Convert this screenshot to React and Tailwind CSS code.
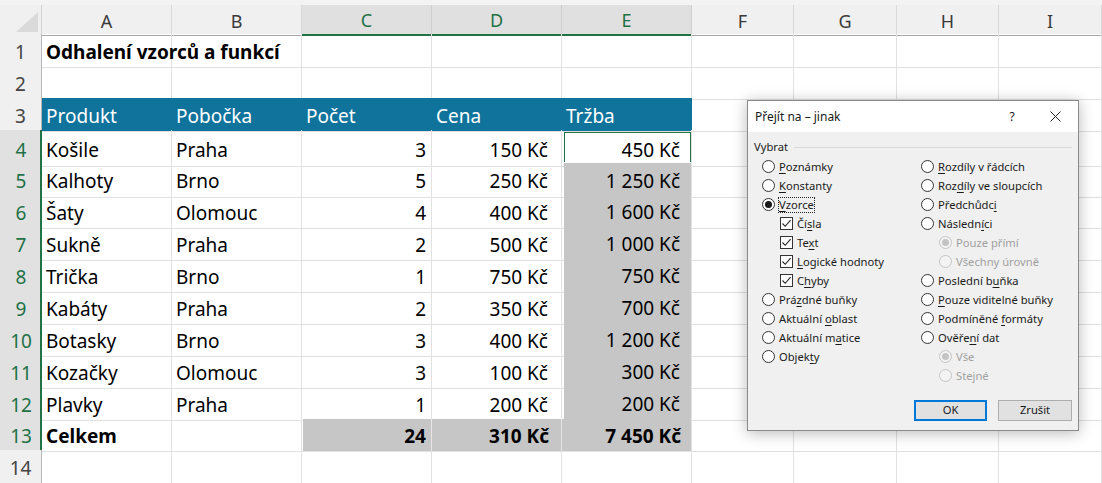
import React from "react";

const COLS = "grid grid-cols-[42px_130px_130px_130px_130px_130px_102px_103px_102px_1fr]";

const data = [
  ["Košile", "Praha", "3", "150 Kč", "450 Kč"],
  ["Kalhoty", "Brno", "5", "250 Kč", "1 250 Kč"],
  ["Šaty", "Olomouc", "4", "400 Kč", "1 600 Kč"],
  ["Sukně", "Praha", "2", "500 Kč", "1 000 Kč"],
  ["Trička", "Brno", "1", "750 Kč", "750 Kč"],
  ["Kabáty", "Praha", "2", "350 Kč", "700 Kč"],
  ["Botasky", "Brno", "3", "400 Kč", "1 200 Kč"],
  ["Kozačky", "Olomouc", "3", "100 Kč", "300 Kč"],
  ["Plavky", "Praha", "1", "200 Kč", "200 Kč"],
];

function RowHead({ n, sel }) {
  return sel ? (
    <div className="h-full flex items-center justify-center pt-[4px] font-normal bg-[#e1e1e1] text-[#1e7145] border-b border-[#cfcfcf] border-r-2 border-r-[#217346] pl-[2px]">
      {n}
    </div>
  ) : (
    <div className="h-full flex items-center justify-center pt-[4px] font-normal bg-[#f0f0f0] text-[#444] border-b border-[#d6d6d6] border-r border-r-[#b8b8b8]">
      {n}
    </div>
  );
}

function Cell({ children, right, className = "" }) {
  return (
    <div
      className={`h-full flex items-center pt-[4px] border-r border-b border-[#e1e1e1] whitespace-nowrap overflow-visible ${right ? "justify-end" : "justify-start pl-[4px]"} ${className}`}
    >
      {children}
    </div>
  );
}

function EmptyCells({ n }) {
  return Array.from({ length: n }).map((_, i) => <Cell key={i} />);
}

function Radio({ checked, disabled }) {
  return (
    <span
      className={`inline-flex w-[13px] h-[13px] rounded-full border items-center justify-center shrink-0 ${disabled ? "border-[#c4c4c4] bg-[#f3f3f3]" : "border-[#333] bg-white"}`}
    >
      {checked && (
        <span className={`w-[7px] h-[7px] rounded-full ${disabled ? "bg-[#c4c4c4]" : "bg-[#1a1a1a]"}`} />
      )}
    </span>
  );
}

function Check() {
  return (
    <span className="inline-flex w-[13px] h-[13px] border border-[#333] bg-white items-center justify-center shrink-0">
      <svg width="11" height="11" viewBox="0 0 11 11">
        <path d="M1.5 5.5 L4.2 8.3 L9.6 2.2" fill="none" stroke="#222" strokeWidth="1.1" />
      </svg>
    </span>
  );
}

function Lbl({ t, u, disabled }) {
  if (u === undefined || u < 0) return <span className={disabled ? "text-[#a0a0a0]" : ""}>{t}</span>;
  return (
    <span className={disabled ? "text-[#a0a0a0]" : ""}>
      {t.slice(0, u)}
      <span className="underline underline-offset-[2px]">{t[u]}</span>
      {t.slice(u + 1)}
    </span>
  );
}

function Opt({ kind = "radio", t, u, checked, disabled, indent, focus }) {
  return (
    <div className={`h-[19px] flex items-center ${indent ? "pl-[18px]" : ""}`}>
      {kind === "radio" ? <Radio checked={checked} disabled={disabled} /> : <Check />}
      <span className={`ml-[4px] leading-[14px] ${focus ? "outline-1 outline-dotted outline-[#222] outline-offset-0" : ""}`}>
        <Lbl t={t} u={u} disabled={disabled} />
      </span>
    </div>
  );
}

function Dialog() {
  return (
    <div className="absolute left-[747px] top-[100px] w-[332px] h-[331px] bg-[#f0f0f0] border border-[#8a8a8a] shadow-[0_2px_14px_rgba(0,0,0,0.28)] font-['Noto_Sans',sans-serif] text-[11.2px] text-[#1a1a1a] flex flex-col">
      <div className="h-[31px] bg-white flex items-center pl-[7px] pr-[14px]">
        <span className="flex-1 text-[12px]">Přejít na – jinak</span>
        <span className="w-[14px] text-center text-[12px] mr-[31px]">?</span>
        <svg width="11" height="11" viewBox="0 0 11 11" className="mr-[3px]">
          <path d="M0.5 0.5 L10.5 10.5 M10.5 0.5 L0.5 10.5" stroke="#222" strokeWidth="1" />
        </svg>
      </div>
      <div className="pt-[7px] pl-[6px] pr-[6px] flex items-center h-[24px]">
        <span>Vybrat</span>
        <div className="flex-1 h-px bg-[#d9d9d9] ml-[6px]" />
      </div>
      <div className="flex pl-[14px] pt-[1px]">
        <div className="w-[159px] flex flex-col">
          <Opt t="Poznámky" u={0} />
          <Opt t="Konstanty" u={0} />
          <Opt t="Vzorce" u={0} checked focus />
          <Opt kind="check" t="Čísla" u={2} indent />
          <Opt kind="check" t="Text" u={2} indent />
          <Opt kind="check" t="Logické hodnoty" u={0} indent />
          <Opt kind="check" t="Chyby" u={1} indent />
          <Opt t="Prázdné buňky" u={3} />
          <Opt t="Aktuální oblast" u={9} />
          <Opt t="Aktuální matice" u={10} />
          <Opt t="Objekty" u={5} />
        </div>
        <div className="flex flex-col">
          <Opt t="Rozdíly v řádcích" u={0} />
          <Opt t="Rozdíly ve sloupcích" u={3} />
          <Opt t="Předchůdci" u={9} />
          <Opt t="Následníci" u={7} />
          <Opt t="Pouze přímí" checked disabled indent />
          <Opt t="Všechny úrovně" disabled indent />
          <Opt t="Poslední buňka" u={10} />
          <Opt t="Pouze viditelné buňky" u={0} />
          <Opt t="Podmíněné formáty" u={10} />
          <Opt t="Ověření dat" u={5} />
          <Opt t="Vše" checked disabled indent />
          <Opt t="Stejné" disabled indent />
        </div>
      </div>
      <div className="flex justify-end pr-[6px] mt-[15px] gap-[11px]">
        <div className="w-[73px] h-[21px] border-2 border-[#0078d7] bg-[#e1e1e1] flex items-center justify-center">OK</div>
        <div className="w-[74px] h-[21px] border border-[#adadad] bg-[#e1e1e1] flex items-center justify-center">Zrušit</div>
      </div>
    </div>
  );
}

export default function App() {
  const hdrs = ["A", "B", "C", "D", "E", "F", "G", "H", "I"];
  return (
    <div className="relative w-[1102px] h-[483px] overflow-hidden bg-white font-['Noto_Sans',sans-serif] text-[19px] text-black">
      <div className="h-[5px] bg-[#f3f3f3]" />
      {/* Column headers */}
      <div className={`${COLS} h-[29px] bg-[#f0f0f0]`}>
        <div className="h-full border-b border-[#a8a8a8] border-r border-r-[#d0d0d0] flex items-end justify-end pr-[3px] pb-[3px]">
          <svg width="22" height="20" viewBox="0 0 22 20">
            <polygon points="0,20 22,20 22,0" fill="#dadada" />
          </svg>
        </div>
        {hdrs.map((h, i) => {
          const sel = i >= 2 && i <= 4;
          return sel ? (
            <div key={h} className="h-full pt-[2px] bg-[#e0e0e0] text-[#1e7145] border-r border-r-[#cfcfcf] border-b-2 border-b-[#217346] flex items-center justify-center text-[18px]">
              {h}
            </div>
          ) : (
            <div key={h} className="h-full pt-[2px] text-[#3a3a3a] border-r border-r-[#d8d8d8] border-b border-b-[#a8a8a8] flex items-center justify-center text-[18px]">
              {h}
            </div>
          );
        })}
      </div>
      {/* Row 1 */}
      <div className={`${COLS} h-[32px]`}>
        <RowHead n={1} />
        <Cell className="font-bold">Odhalení vzorců a funkcí</Cell>
        <EmptyCells n={8} />
      </div>
      {/* Row 2 */}
      <div className={`${COLS} h-[32px]`}>
        <RowHead n={2} />
        <EmptyCells n={9} />
      </div>
      {/* Row 3 */}
      <div className={`${COLS} h-[32px]`}>
        <RowHead n={3} />
        {["Produkt", "Pobočka", "Počet", "Cena", "Tržba"].map((t) => (
          <div key={t} className="h-full pt-[4px] bg-[#0f739c] text-white flex items-center pl-[4px] border-b border-[#e1e1e1]">
            {t}
          </div>
        ))}
        <EmptyCells n={4} />
      </div>
      {/* Data rows */}
      {data.map((r, i) => (
        <div key={i} className={`${COLS} h-[32px]`}>
          <RowHead n={i + 4} sel />
          <Cell>{r[0]}</Cell>
          <Cell>{r[1]}</Cell>
          <Cell right className="pr-[5px]">{r[2]}</Cell>
          <Cell right className="pr-[13px]">{r[3]}</Cell>
          {i === 0 ? (
            <div className="h-full border-r border-b border-[#e1e1e1] pl-[2px] pt-[2px]">
              <div className="h-full border border-[#217346] flex items-center justify-end pt-[3px] pr-[10px] whitespace-nowrap">
                {r[4]}
              </div>
            </div>
          ) : (
            <div className="h-full border-r border-b border-[#e1e1e1] pl-[2px]">
              <div className={`h-full bg-[#c6c6c6] border-b border-[#d8d8d8] flex items-center justify-end pt-[4px] pr-[11px] whitespace-nowrap ${i === 1 ? "border-t border-t-white" : ""}`}>
                {r[4]}
              </div>
            </div>
          )}
          <EmptyCells n={4} />
        </div>
      ))}
      {/* Row 13 */}
      <div className={`${COLS} h-[32px]`}>
        <RowHead n={13} sel />
        <Cell className="font-bold">Celkem</Cell>
        <Cell />
        <div className="h-full border-b border-[#e1e1e1] pt-[1px] pl-[1px] font-bold">
          <div className="h-full bg-[#c6c6c6] border-r border-[#e6e6e6] flex items-center justify-end pt-[3px] pr-[5px]">24</div>
        </div>
        <div className="h-full border-b border-[#e1e1e1] pt-[1px] font-bold">
          <div className="h-full bg-[#c6c6c6] border-r border-[#e6e6e6] flex items-center justify-end pt-[3px] pr-[12px]">310 Kč</div>
        </div>
        <div className="h-full border-r border-b border-[#e1e1e1] pt-[1px] font-bold">
          <div className="h-full bg-[#c6c6c6] flex items-center justify-end pt-[3px] pr-[10px] whitespace-nowrap">7 450 Kč</div>
        </div>
        <EmptyCells n={4} />
      </div>
      {/* Row 14 */}
      <div className={`${COLS} h-[32px]`}>
        <RowHead n={14} />
        <EmptyCells n={9} />
      </div>
      <Dialog />
    </div>
  );
}
